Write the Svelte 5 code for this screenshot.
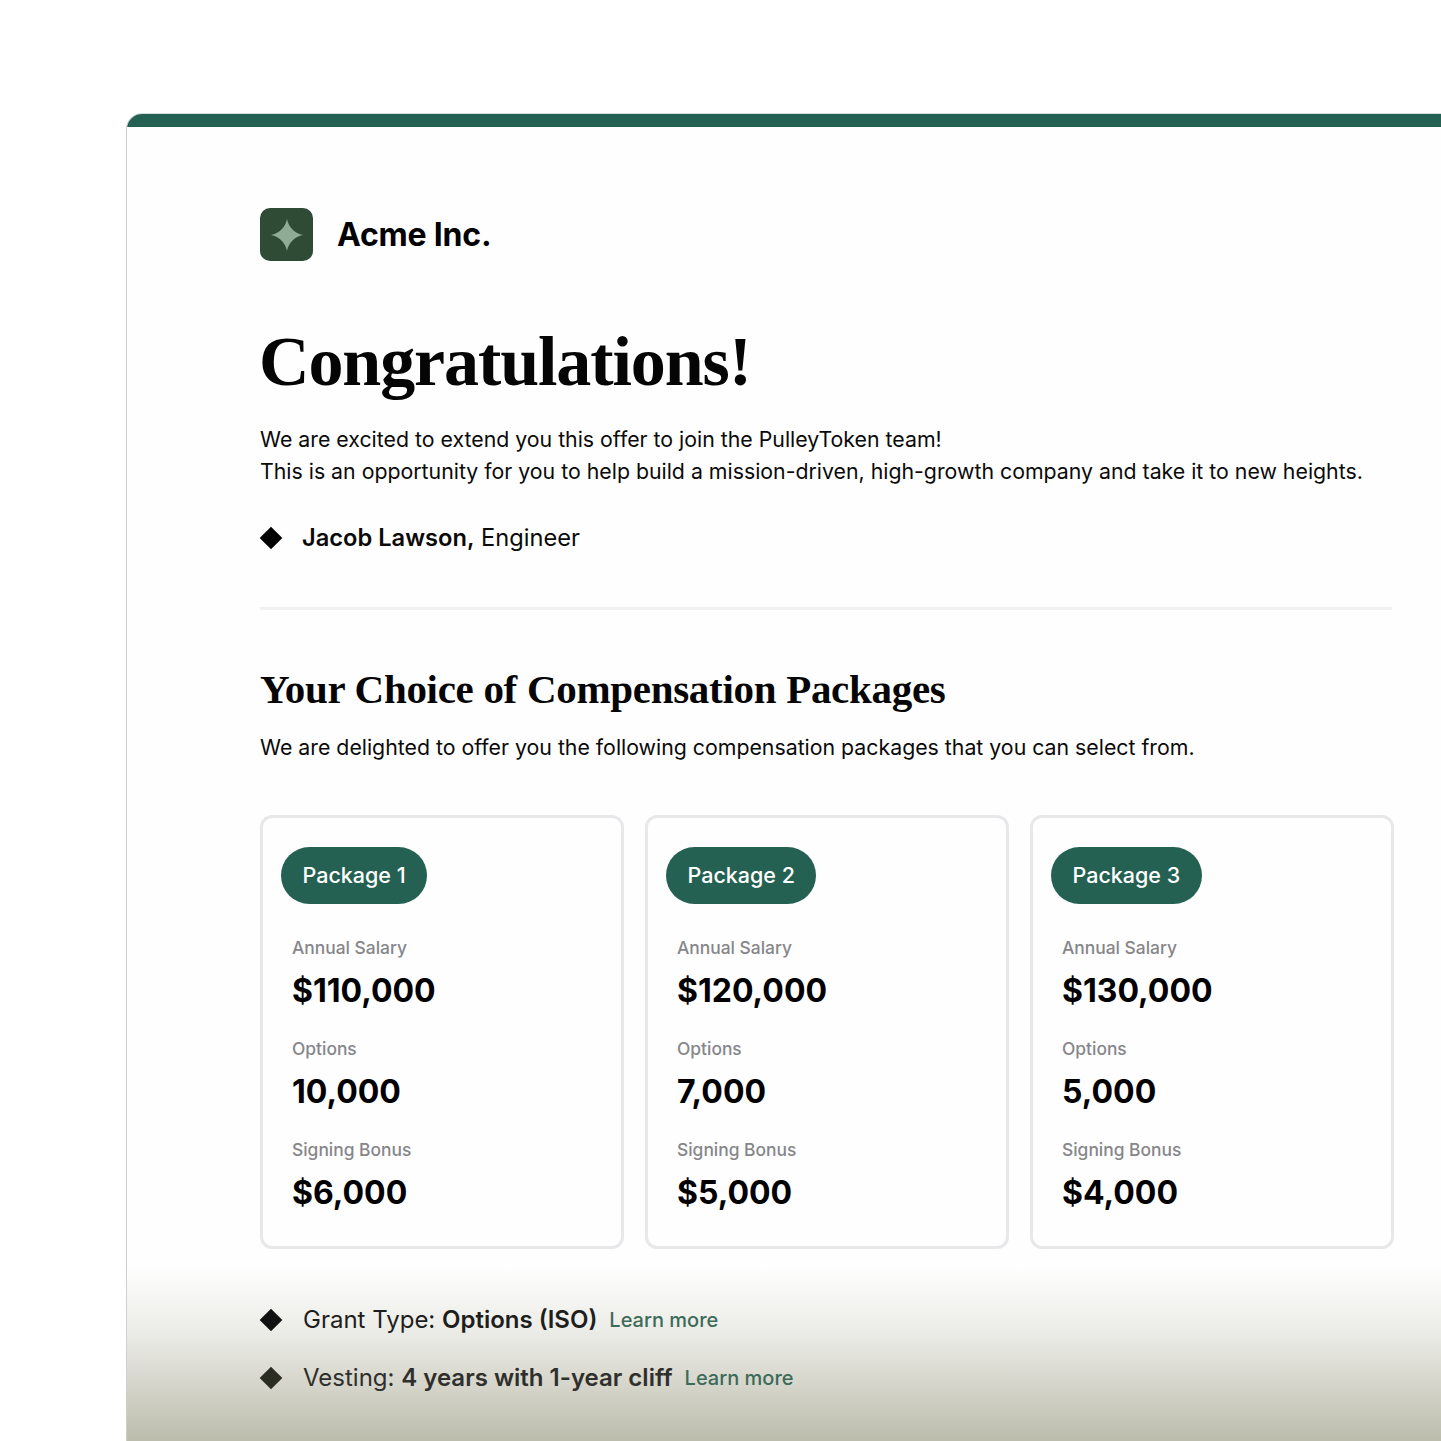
<script lang="ts">
    const packages = [
        { name: "Package 1", salary: "$110,000", options: "10,000", bonus: "$6,000" },
        { name: "Package 2", salary: "$120,000", options: "7,000", bonus: "$5,000" },
        { name: "Package 3", salary: "$130,000", options: "5,000", bonus: "$4,000" },
    ];
</script>

<div class="page">
    <div class="sheet">
        <div class="top-bar"></div>
        <div class="fade"></div>
        <div class="content">
            <div class="brand">
                <div class="logo">
                    <svg viewBox="0 0 32 32" width="32" height="32">
                        <path d="M16 0 C17.5 8 24 14.5 32 16 C24 17.5 17.5 24 16 32 C14.5 24 8 17.5 0 16 C8 14.5 14.5 8 16 0 Z" fill="#8fab96" />
                    </svg>
                </div>
                <span class="company">Acme Inc.</span>
            </div>

            <h1>Congratulations!</h1>
            <p class="intro">
                We are excited to extend you this offer to join the PulleyToken team!<br />
                This is an opportunity for you to help build a mission-driven, high-growth company and take it to new heights.
            </p>

            <div class="person">
                <span class="diamond"></span>
                <span><b>Jacob Lawson,</b> Engineer</span>
            </div>

            <hr />

            <h2>Your Choice of Compensation Packages</h2>
            <p class="sub">We are delighted to offer you the following compensation packages that you can select from.</p>

            <div class="cards">
                {#each packages as pkg}
                    <div class="card">
                        <span class="pill">{pkg.name}</span>
                        <dl>
                            <dt>Annual Salary</dt>
                            <dd>{pkg.salary}</dd>
                            <dt>Options</dt>
                            <dd>{pkg.options}</dd>
                            <dt>Signing Bonus</dt>
                            <dd>{pkg.bonus}</dd>
                        </dl>
                    </div>
                {/each}
            </div>

            <ul class="terms">
                <li>
                    <span class="diamond"></span>
                    <span>Grant Type: <b>Options (ISO)</b></span>
                    <a href="#grant">Learn more</a>
                </li>
                <li class="faded">
                    <span class="diamond"></span>
                    <span>Vesting: <b>4 years with 1-year cliff</b></span>
                    <a href="#vesting">Learn more</a>
                </li>
            </ul>
        </div>
    </div>
</div>

<style>
    :global(body) {
        background: #fff;
        overflow: hidden;
    }

    .page {
        height: 1441px;
        overflow: hidden;
        padding: 113px 0 0 126px;
        box-sizing: border-box;
        font-family: Inter, "Liberation Sans", sans-serif;
        color: #0a0a0a;
    }

    .sheet {
        position: relative;
        width: 1400px;
        height: 1328px;
        background: #fefefe;
        border-left: 1px solid #cfcfcf;
        border-top: 1px solid #d4dbd8;
        border-radius: 16px 0 0 0;
        overflow: hidden;
    }

    .top-bar {
        height: 13px;
        background: #256153;
    }

    .content {
        position: relative;
        padding: 81px 0 0 133px;
        width: 1134px;
    }

    .brand {
        display: flex;
        align-items: center;
        gap: 24px;
    }

    .logo {
        width: 53px;
        height: 53px;
        border-radius: 10px;
        background: #2f4b36;
        display: flex;
        align-items: center;
        justify-content: center;
    }

    .company {
        font-size: 32px;
        font-weight: 700;
        letter-spacing: -0.2px;
        color: #000;
    }

    h1 {
        margin: 62px 0 0 -1px;
        font-family: "Liberation Serif", serif;
        font-size: 70px;
        line-height: 78px;
        font-weight: 700;
        letter-spacing: -1.1px;
        color: #050505;
    }

    .intro {
        margin: 22px 0 0;
        font-size: 21.3px;
        line-height: 32px;
    }

    .person {
        display: flex;
        align-items: center;
        gap: 20px;
        margin-top: 35px;
        font-size: 23.66px;
        line-height: 32px;
    }

    b {
        font-weight: 600;
    }

    .diamond {
        width: 16px;
        height: 16px;
        margin: 0 3px;
        background: #000;
        transform: rotate(45deg);
        flex: none;
    }

    hr {
        margin: 53px 0 0;
        width: 1132px;
        border: 0;
        height: 3px;
        background: #f2f1f2;
    }

    h2 {
        margin: 56px 0 0;
        font-family: "Liberation Serif", serif;
        font-size: 41px;
        line-height: 46px;
        font-weight: 700;
        letter-spacing: -0.3px;
        color: #050505;
    }

    .sub {
        margin: 19px 0 0;
        font-size: 21.3px;
        line-height: 32px;
    }

    .cards {
        display: grid;
        grid-template-columns: repeat(3, 364px);
        gap: 21px;
        margin-top: 52px;
    }

    .card {
        height: 434px;
        box-sizing: border-box;
        border: 3px solid #e8e7ea;
        border-radius: 12px;
        padding: 29px 18px 0;
    }

    .pill {
        display: inline-block;
        height: 57px;
        line-height: 57px;
        padding: 0 21.5px;
        border-radius: 29px;
        background: #256153;
        color: #fff;
        font-size: 21.5px;
        font-weight: 500;
    }

    dl {
        margin: 30px 0 0 11px;
    }

    dt {
        font-size: 17.4px;
        line-height: 28px;
        font-weight: 500;
        color: #86868a;
    }

    dd {
        margin: 9px 0 24px;
        font-size: 32px;
        line-height: 40px;
        font-weight: 700;
        color: #000;
    }

    .terms {
        list-style: none;
        margin: 55px 0 0;
        padding: 0;
        font-size: 24px;
        line-height: 32px;
    }

    .terms li {
        display: flex;
        align-items: center;
        margin-bottom: 26px;
        color: #1e1e1c;
    }

    .terms li .diamond {
        margin-right: 24px;
        background: #111;
    }

    .terms li.faded {
        color: #2f2f2b;
    }

    .terms li.faded .diamond {
        background: #2b2d23;
    }

    .terms a {
        margin-left: 12px;
        font-size: 20px;
        font-weight: 500;
        color: #3c6b58;
        text-decoration: none;
    }

    .fade {
        position: absolute;
        left: 0;
        right: 0;
        bottom: 0;
        height: 176px;
        background: linear-gradient(to bottom, rgba(188, 188, 172, 0), rgba(188, 188, 172, 0.3) 40%, #bcbcac);
    }
</style>
